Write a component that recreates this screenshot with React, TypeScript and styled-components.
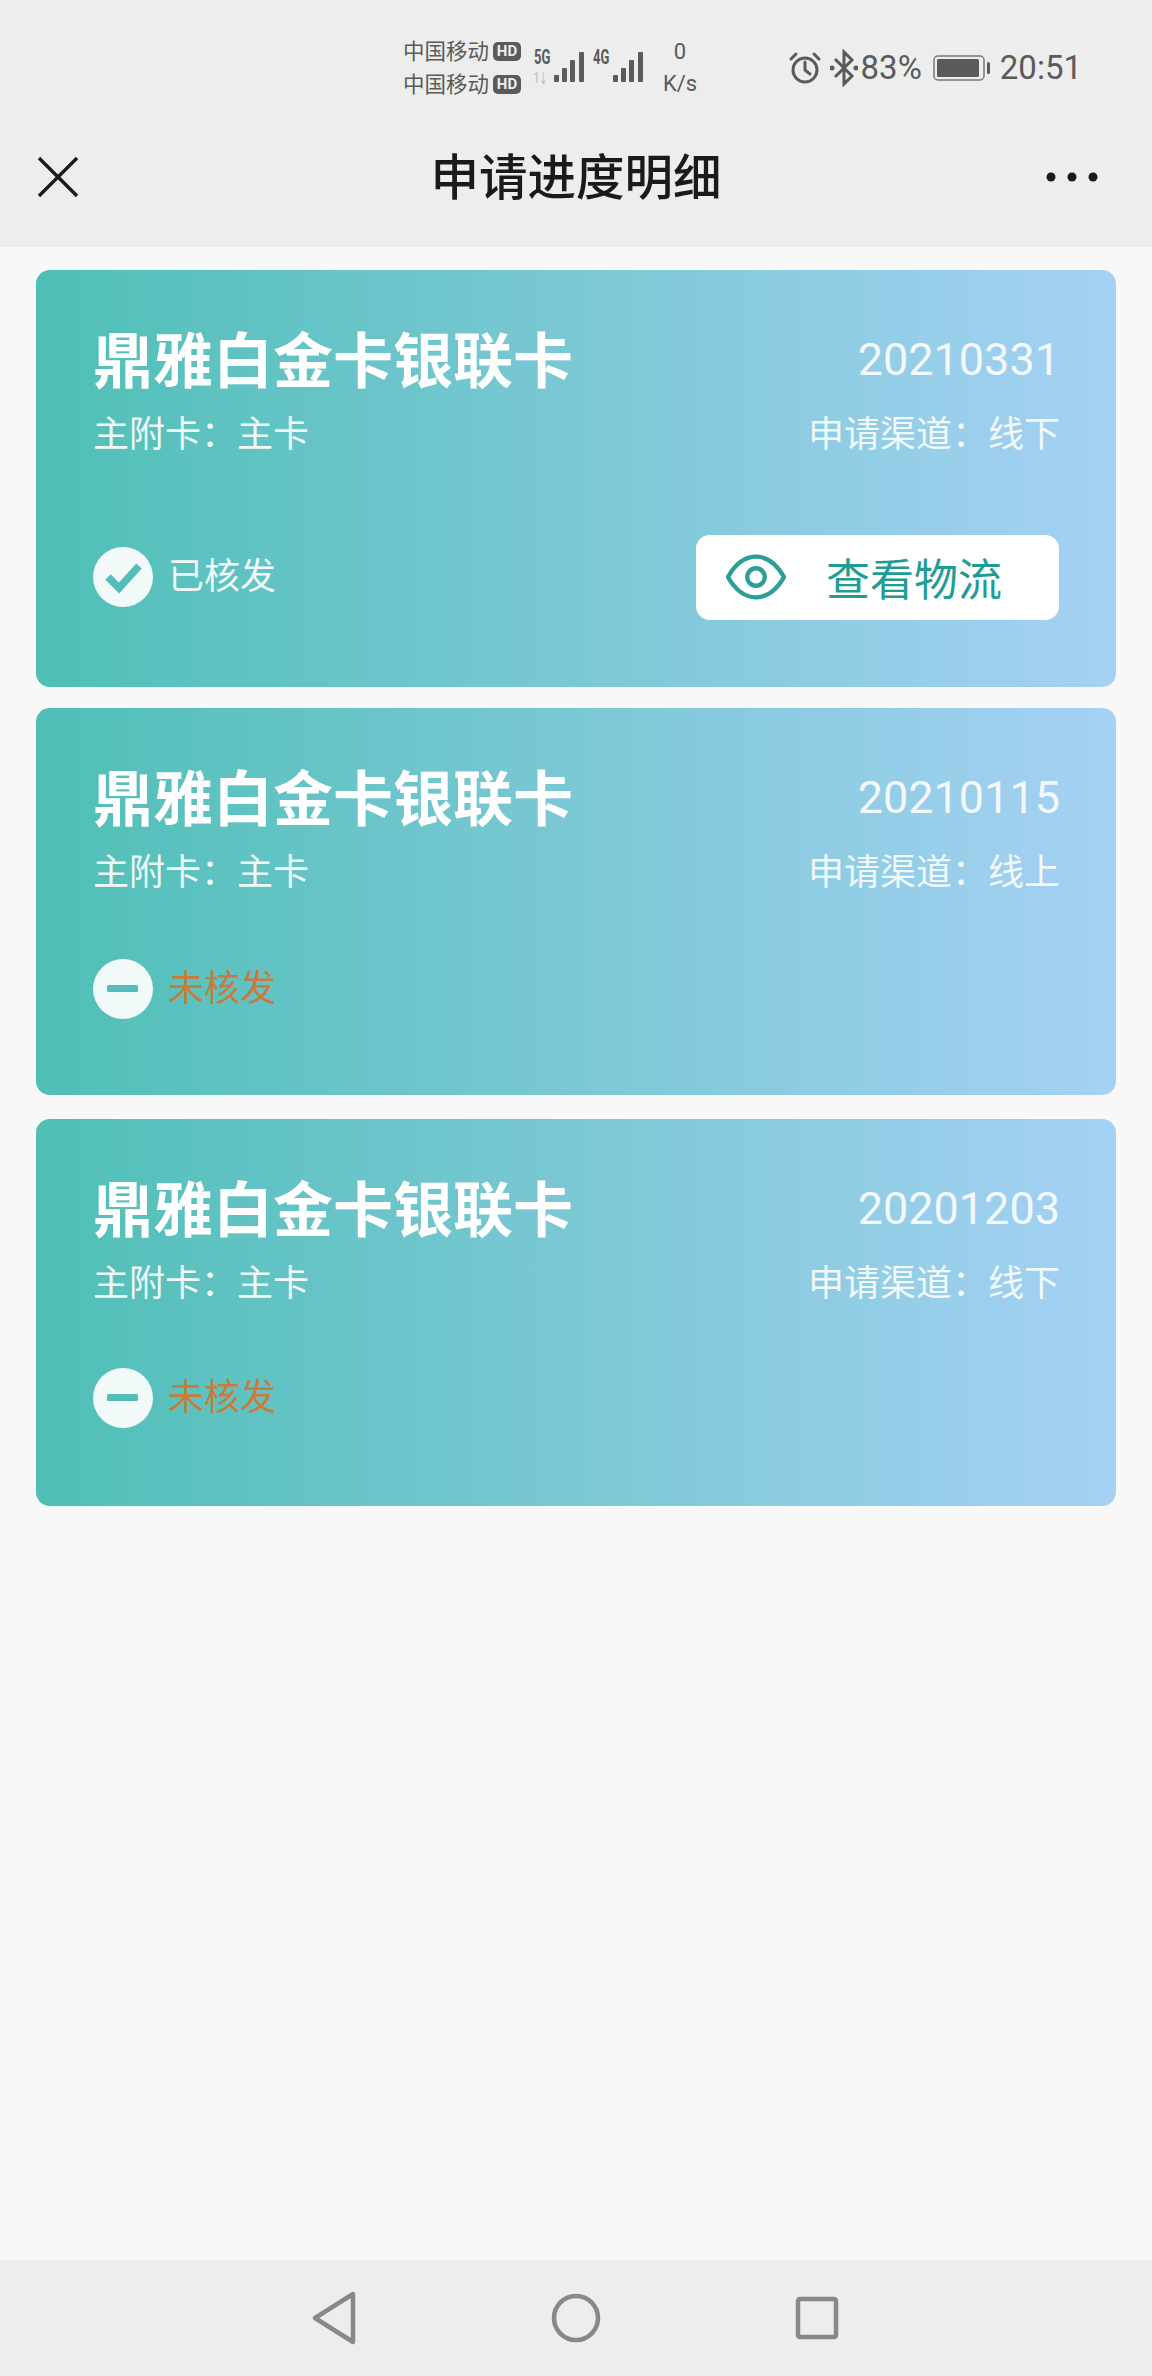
import styled, { createGlobalStyle } from "styled-components";

const GlobalStyle = createGlobalStyle`
  html, body {
    margin: 0;
    padding: 0;
    background: #f8f8f8;
    font-family: Roboto, "Noto Sans CJK SC", sans-serif;
  }
`;

const Page = styled.div`
  width: 1152px;
  height: 2376px;
  display: flex;
  flex-direction: column;
  overflow: hidden;
`;

const StatusBar = styled.div`
  height: 120px;
  box-sizing: border-box;
  padding: 16px 70px 0 403px;
  background: #ededed;
  color: #5a5a5a;
  display: flex;
  align-items: center;
`;

const Carriers = styled.div`
  width: 131px;
  flex-shrink: 0;
  display: flex;
  flex-direction: column;
  gap: 5px;
`;

const Carrier = styled.div`
  display: flex;
  align-items: center;
  gap: 4px;
  font-size: 21.5px;
  line-height: 28px;
  white-space: nowrap;
`;

const HdBadge = styled.span`
  width: 28px;
  height: 19px;
  border-radius: 5px;
  background: #5a5a5a;
  color: #ededed;
  font-size: 15px;
  line-height: 19px;
  font-weight: 700;
  text-align: center;
`;

const Signal = styled.div<{ $first?: boolean }>`
  flex-shrink: 0;
  display: flex;
  align-items: flex-end;
  height: 40px;
  margin: 0 0 5px ${(p) => (p.$first ? 0 : 8)}px;
`;

const NetLabels = styled.div`
  width: 19px;
  height: 40px;
  display: flex;
  flex-direction: column;
  justify-content: space-between;
`;

const NetLabel = styled.span<{ $faint?: boolean }>`
  font-size: ${(p) => (p.$faint ? 14 : 21)}px;
  line-height: ${(p) => (p.$faint ? 15 : 22)}px;
  font-weight: 700;
  color: ${(p) => (p.$faint ? "#c4c4c4" : "#5a5a5a")};
  transform: scaleX(0.62);
  transform-origin: left center;
  white-space: nowrap;
`;

const BarsIcon = styled.svg`
  margin-bottom: 4px;
`;

const Speed = styled.div`
  width: 46px;
  flex-shrink: 0;
  margin-left: 13px;
  font-size: 22px;
  line-height: 32px;
  text-align: center;
`;

const Indicators = styled.div`
  margin-left: auto;
  display: flex;
  align-items: center;
  gap: 8px;
  font-size: 33px;
  line-height: 40px;
`;

const Percent = styled.span`
  margin: 0 3px 0 -5px;
`;

const Time = styled.span`
  margin-left: 2px;
`;

const AppBar = styled.header`
  height: 127px;
  box-sizing: border-box;
  padding: 0 54px 13px;
  background: #ededed;
  display: grid;
  grid-template-columns: 1fr auto 1fr;
  align-items: center;
`;

const CloseIcon = styled.svg`
  margin-left: -16px;
`;

const MoreIcon = styled.svg`
  justify-self: end;
`;

const Title = styled.h1`
  margin: 4px 0 0;
  font-size: 48.5px;
  line-height: 60px;
  font-weight: 500;
  color: #1a1a1a;
`;

const Content = styled.main`
  flex: 1;
  padding: 23px 36px 0;
  display: flex;
  flex-direction: column;
  gap: 21px;
  background: #f8f8f8;
`;

const Card = styled.section<{ $height: number }>`
  height: ${(p) => p.$height}px;
  box-sizing: border-box;
  padding: 56px 56px 0 57px;
  border-radius: 14px;
  background: linear-gradient(90deg, #4fbfb6 0%, #a6d1f4 100%);
  color: #fff;

  &:last-child {
    margin-top: 3px;
  }
`;

const CardRow = styled.div`
  display: flex;
  align-items: flex-start;
  justify-content: space-between;
`;

const CardName = styled.h2`
  margin: 0;
  font-size: 60px;
  line-height: 74px;
  font-weight: 700;
`;

const CardDate = styled.span`
  margin-top: -3px;
  font-size: 45px;
  line-height: 74px;
  color: #f2f8fb;
`;

const MetaRow = styled(CardRow)`
  margin-top: 10px;
`;

const Meta = styled.span`
  font-size: 36px;
  line-height: 50px;
  color: #f0f8f9;
`;

const CardFooter = styled(CardRow)<{ $gap: number }>`
  margin-top: ${(p) => p.$gap}px;
  height: 84px;
  align-items: center;
`;

const Status = styled.div`
  display: flex;
  align-items: center;
  gap: 15px;
`;

const StatusIcon = styled.svg`
  width: 60px;
  height: 60px;
`;

const StatusText = styled.span<{ $pending?: boolean }>`
  font-size: 36px;
  line-height: 50px;
  color: ${(p) => (p.$pending ? "#c97b3e" : "#f0f8f9")};
`;

const LogisticsButton = styled.button`
  width: 363px;
  height: 85px;
  margin-right: 1px;
  box-sizing: border-box;
  padding: 0 0 0 30px;
  border: 0;
  border-radius: 14px;
  background: #fff;
  color: #1f9d94;
  font-family: inherit;
  font-size: 44px;
  display: flex;
  align-items: center;
  gap: 40px;
`;

const NavBar = styled.nav`
  height: 116px;
  background: #ededed;
  display: flex;
  align-items: center;
  justify-content: center;
  gap: 181px;
`;

const NavIcon = styled.svg`
  width: 60px;
  height: 60px;
  fill: none;
  stroke: #888;
  stroke-width: 4.5;
  stroke-linejoin: round;
`;

const Bars = () => (
  <BarsIcon width="32" height="30" viewBox="0 0 32 30" fill="#5a5a5a">
    <rect x="1" y="23" width="5" height="7" rx="1" />
    <rect x="9" y="16" width="5" height="14" rx="1" />
    <rect x="17" y="8" width="5" height="22" rx="1" />
    <rect x="26" y="0" width="5" height="30" rx="1" />
  </BarsIcon>
);

const AlarmIcon = () => (
  <svg width="34" height="34" viewBox="0 0 34 34" fill="none" stroke="#5a5a5a" strokeWidth="3" strokeLinecap="round">
    <circle cx="17" cy="19" r="12" />
    <path d="M17 11v8l5 4M3 8l5-5M31 8l-5-5" />
  </svg>
);

const BluetoothIcon = () => (
  <svg width="28" height="38" viewBox="0 0 28 38" fill="none" stroke="#5a5a5a" strokeWidth="3">
    <path d="M5 10l17 17-8 8V3l8 8L5 28" />
    <circle cx="2" cy="19" r="1" fill="#5a5a5a" />
    <circle cx="26" cy="19" r="1" fill="#5a5a5a" />
  </svg>
);

const BatteryIcon = () => (
  <svg width="57" height="26" viewBox="0 0 57 26">
    <rect x="1" y="1" width="50" height="24" rx="4" fill="none" stroke="#777" strokeWidth="1.5" />
    <rect x="4" y="4" width="42" height="18" rx="1.5" fill="#5a5a5a" />
    <rect x="54" y="7" width="3" height="12" rx="1.5" fill="#5a5a5a" />
  </svg>
);

const CheckIcon = () => (
  <StatusIcon viewBox="0 0 60 60">
    <circle cx="30" cy="30" r="30" fill="#f1f9f9" />
    <path d="M15 30l11 11 20-22" fill="none" stroke="#55bdb9" strokeWidth="7.5" />
  </StatusIcon>
);

const MinusIcon = () => (
  <StatusIcon viewBox="0 0 60 60">
    <circle cx="30" cy="30" r="30" fill="#f1f9f9" />
    <rect x="14" y="26" width="31" height="7" rx="1.5" fill="#52bdb9" />
  </StatusIcon>
);

const EyeIcon = () => (
  <svg width="60" height="46" viewBox="0 0 62 46" fill="none" stroke="#2a9f97" strokeWidth="4.5">
    <path d="M2 23C10 9 20 2 31 2s21 7 29 21c-8 14-18 21-29 21S10 37 2 23z" />
    <circle cx="31" cy="23" r="9" />
  </svg>
);

const cards = [
  { date: "20210331", channel: "线下", issued: true, height: 417, footerGap: 75 },
  { date: "20210115", channel: "线上", issued: false, height: 387, footerGap: 49 },
  { date: "20201203", channel: "线下", issued: false, height: 387, footerGap: 47 },
];

export default function App() {
  return (
    <Page>
      <GlobalStyle />
      <StatusBar>
        <Carriers>
          <Carrier>中国移动<HdBadge>HD</HdBadge></Carrier>
          <Carrier>中国移动<HdBadge>HD</HdBadge></Carrier>
        </Carriers>
        <Signal $first>
          <NetLabels>
            <NetLabel>5G</NetLabel>
            <NetLabel $faint>1↓</NetLabel>
          </NetLabels>
          <Bars />
        </Signal>
        <Signal>
          <NetLabels>
            <NetLabel>4G</NetLabel>
          </NetLabels>
          <Bars />
        </Signal>
        <Speed>
          0<br />K/s
        </Speed>
        <Indicators>
          <AlarmIcon />
          <BluetoothIcon />
          <Percent>83%</Percent>
          <BatteryIcon />
          <Time>20:51</Time>
        </Indicators>
      </StatusBar>
      <AppBar>
        <CloseIcon width="40" height="40" viewBox="0 0 40 40" stroke="#1a1a1a" strokeWidth="3.4">
          <path d="M1 1l38 38M39 1L1 39" />
        </CloseIcon>
        <Title>申请进度明细</Title>
        <MoreIcon width="52" height="10" viewBox="0 0 52 10" fill="#1a1a1a">
          <circle cx="5" cy="5" r="4.5" />
          <circle cx="26" cy="5" r="4.5" />
          <circle cx="47" cy="5" r="4.5" />
        </MoreIcon>
      </AppBar>
      <Content>
        {cards.map((card) => (
          <Card key={card.date} $height={card.height}>
            <CardRow>
              <CardName>鼎雅白金卡银联卡</CardName>
              <CardDate>{card.date}</CardDate>
            </CardRow>
            <MetaRow>
              <Meta>主附卡：主卡</Meta>
              <Meta>申请渠道：{card.channel}</Meta>
            </MetaRow>
            <CardFooter $gap={card.footerGap}>
              <Status>
                {card.issued ? <CheckIcon /> : <MinusIcon />}
                <StatusText $pending={!card.issued}>{card.issued ? "已核发" : "未核发"}</StatusText>
              </Status>
              {card.issued && (
                <LogisticsButton>
                  <EyeIcon />
                  查看物流
                </LogisticsButton>
              )}
            </CardFooter>
          </Card>
        ))}
      </Content>
      <NavBar>
        <NavIcon viewBox="0 0 60 60">
          <path d="M48 6v48L10 30z" />
        </NavIcon>
        <NavIcon viewBox="0 0 60 60">
          <circle cx="30" cy="30" r="22" />
        </NavIcon>
        <NavIcon viewBox="0 0 60 60">
          <rect x="11" y="11" width="38" height="38" rx="2" />
        </NavIcon>
      </NavBar>
    </Page>
  );
}
